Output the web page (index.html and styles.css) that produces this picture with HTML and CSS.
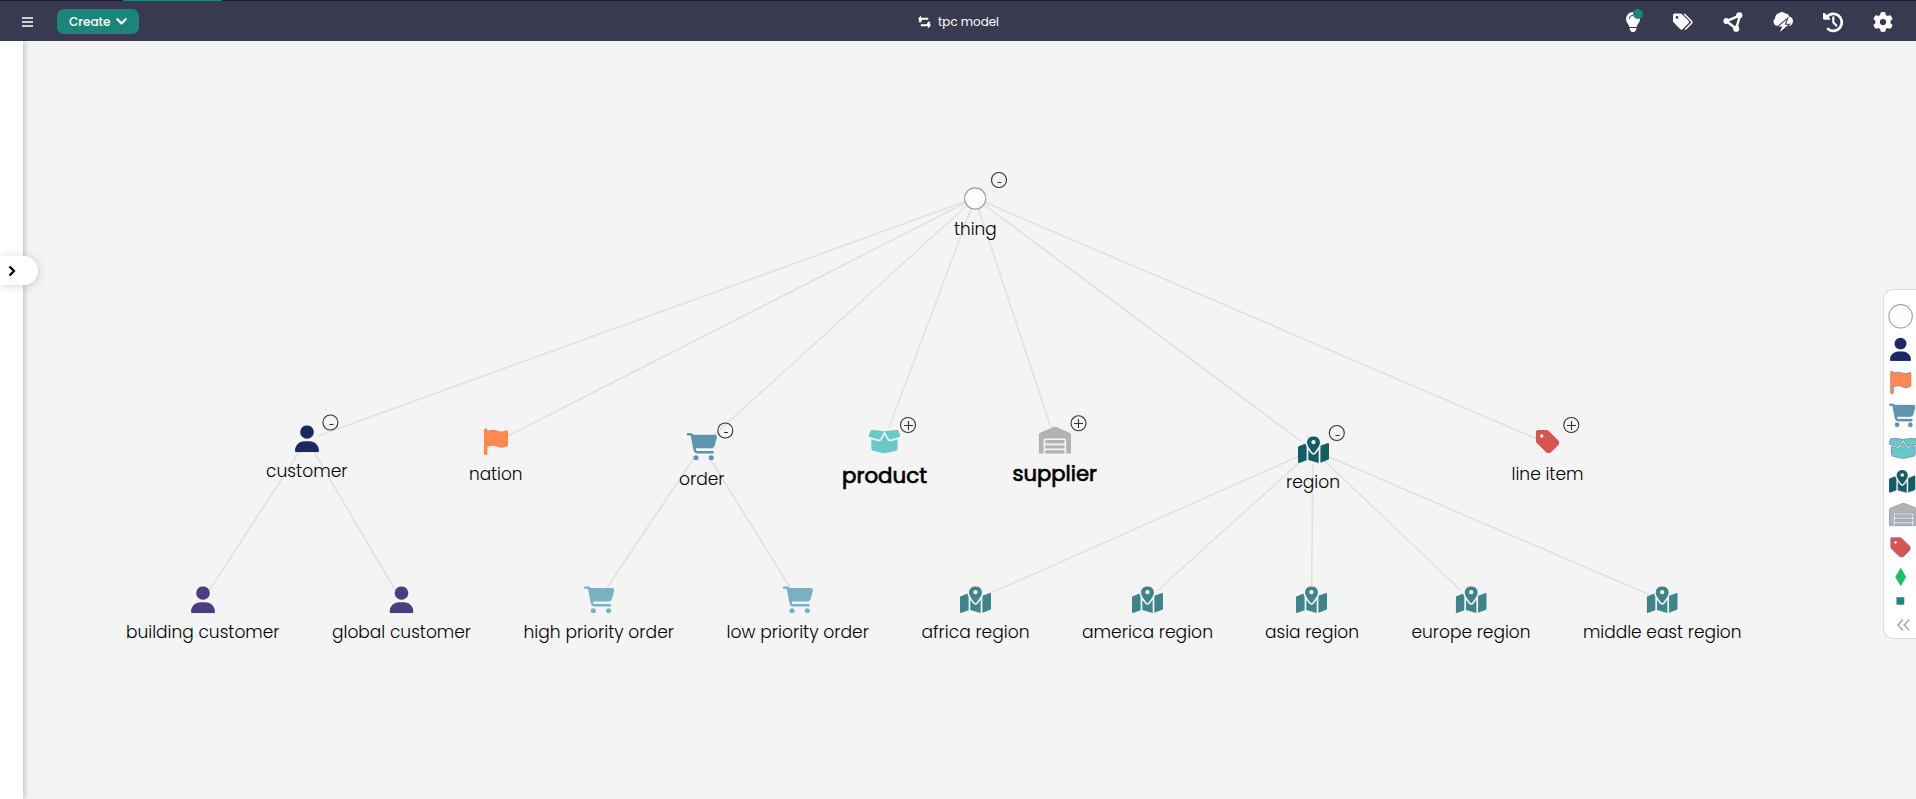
FILE: index.html
```html
<!DOCTYPE html>
<html lang="en">
<head>
<meta charset="utf-8">
<title>tpc model</title>
<link rel="stylesheet" href="styles.css">
</head>
<body>
<svg class="defs" aria-hidden="true">
  <symbol id="user" viewBox="0 0 448 512" preserveAspectRatio="none"><path d="M224 256A128 128 0 1 0 224 0a128 128 0 1 0 0 256zm-45.700 48C79.800 304 0 383.800 0 482.300C0 498.700 13.300 512 29.700 512l388.600 0c16.400 0 29.700-13.300 29.700-29.700C448 383.800 368.200 304 269.700 304l-91.400 0z"/></symbol>
  <symbol id="flag" viewBox="0 0 448 512" preserveAspectRatio="none"><path d="M64 32C64 14.300 49.700 0 32 0S0 14.300 0 32V480c0 17.700 14.300 32 32 32s32-14.300 32-32V352l64.300-16.100c41.100-10.300 84.600-5.500 122.500 13.400c44.200 22.100 95.500 24.800 141.700 7.400l34.700-13c12.500-4.700 20.800-16.600 20.800-30V66.100c0-23-24.200-38-44.800-27.700l-9.600 4.800c-46.300 23.200-100.800 23.200-147.100 0c-35.100-17.600-75.400-22-113.500-12.500L64 48V32z"/></symbol>
  <symbol id="cart" viewBox="0 0 576 512" preserveAspectRatio="none"><path d="M0 24C0 10.700 10.700 0 24 0H69.500c22 0 41.500 12.800 50.600 32h411c26.300 0 45.500 25 38.600 50.400l-41 152.300c-8.500 31.400-37 53.300-69.500 53.300H170.700l5.400 28.500c2.200 11.300 12.100 19.500 23.600 19.500H488c13.300 0 24 10.700 24 24s-10.700 24-24 24H199.700c-34.600 0-64.300-24.600-70.700-58.500L77.400 54.500c-.7-3.800-4-6.500-7.900-6.500H24C10.700 48 0 37.300 0 24zM128 464a48 48 0 1 1 96 0 48 48 0 1 1 -96 0zm336-48a48 48 0 1 1 0 96 48 48 0 1 1 0-96z"/></symbol>
  <symbol id="box" viewBox="13 33 614 446" preserveAspectRatio="none"><path d="M58.900 42.100c3-6.100 9.600-9.600 16.300-8.700L320 64 564.800 33.400c6.700-.8 13.300 2.700 16.300 8.700l41.700 83.400c9 17.900-.6 39.600-19.800 45.100L439.600 217.300c-13.900 4-28.800-1.900-36.200-14.300L320 64 236.600 203c-7.400 12.400-22.300 18.300-36.200 14.300L37.100 170.600c-19.300-5.500-28.800-27.200-19.800-45.100L58.900 42.100zM321.100 128l54.900 91.400c14.900 24.800 44.600 36.600 72.500 28.600L576 211.600v167c0 22-15 41.200-36.400 46.600l-204.100 51c-10.200 2.600-20.900 2.600-31 0l-204.100-51C79 419.700 64 400.500 64 378.500v-167L191.600 248c27.800 8 57.600-3.800 72.500-28.600L318.900 128h2.200z"/></symbol>
  <symbol id="map" viewBox="0 0 576 512" preserveAspectRatio="none"><path d="M408 120c0 54.600-73.100 151.900-105.200 192c-7.700 9.600-22 9.600-29.600 0C241.100 271.900 168 174.600 168 120C168 53.700 221.700 0 288 0s120 53.700 120 120zm8 80.400c3.500-6.900 6.700-13.800 9.600-20.600c.5-1.200 1-2.500 1.500-3.700l116-46.400C558.900 123.400 576 135 576 152V422.800c0 9.800-6 18.600-15.100 22.300L416 503V200.400zM137.600 138.300c2.400 14.100 7.200 28.300 12.800 41.500c2.900 6.800 6.100 13.700 9.600 20.600V451.800L32.900 502.700C17.100 509 0 497.400 0 480.400V209.600c0-9.800 6-18.600 15.100-22.300l122.600-49zM327.800 332c13.900-17.400 35.700-45.700 56.200-77V504.300L192 449.400V255c20.500 31.300 42.300 59.600 56.200 77c20.500 25.600 59.100 25.600 79.600 0zM288 152a40 40 0 1 0 0-80 40 40 0 1 0 0 80z"/></symbol>
  <symbol id="warehouse" viewBox="0 0 640 512" preserveAspectRatio="none"><path d="M504 352H136.400c-4.400 0-8 3.600-8 8l-.1 48c0 4.400 3.600 8 8 8H504c4.400 0 8-3.600 8-8v-48c0-4.400-3.600-8-8-8zm0 96H136.100c-4.400 0-8 3.600-8 8l-.1 48c0 4.400 3.600 8 8 8h368c4.400 0 8-3.600 8-8v-48c0-4.400-3.600-8-8-8zm0-192H136.600c-4.400 0-8 3.600-8 8l-.1 48c0 4.400 3.600 8 8 8H504c4.400 0 8-3.600 8-8v-48c0-4.400-3.600-8-8-8zm106.500-139L338.400 3.700a48.150 48.150 0 0 0-36.900 0L29.500 117C11.700 124.500 0 141.900 0 161.300V504c0 4.400 3.600 8 8 8h80c4.400 0 8-3.600 8-8V256c0-17.600 14.600-32 32.600-32h382.800c18 0 32.600 14.400 32.600 32v248c0 4.400 3.600 8 8 8h80c4.400 0 8-3.600 8-8V161.300c0-19.400-11.700-36.800-29.500-44.300z"/></symbol>
  <symbol id="tag" viewBox="0 32 438 438" preserveAspectRatio="none"><path d="M0 80V229.500c0 17 6.700 33.300 18.700 45.300l176 176c25 25 65.500 25 90.500 0L418.700 317.300c25-25 25-65.500 0-90.500l-176-176c-12-12-28.300-18.700-45.300-18.700H48C21.500 32 0 53.500 0 80zm112 32a32 32 0 1 1 0 64 32 32 0 1 1 0-64z"/></symbol>
</svg>

<header class="topbar">
  <div class="progress"></div>
  <div class="top-left">
    <svg class="burger" viewBox="0 0 11 10"><path d="M0 1h11M0 5h11M0 9h11"/></svg>
    <button class="create">
      <svg class="create-label" viewBox="0 0 42 16"><text x="0" y="12" textLength="41.500" lengthAdjust="spacingAndGlyphs">Create</text></svg>
      <svg class="caret" viewBox="0 0 11 7"><path d="M1.300 1.200l4.200 4.200 4.200-4.200"/></svg>
    </button>
  </div>
  <div class="title">
    <svg class="swap" viewBox="0 0 14 14"><path d="M1.500 7.200L4 3.500h7M12.500 6.800L10 10.500H3" class="stroke"/><path d="M3.400 0v7L0 3.500zM10.600 7v7L14 10.500z"/></svg>
    <svg class="title-label" viewBox="0 0 62 20"><text x="0" y="13.500" textLength="61" lengthAdjust="spacingAndGlyphs">tpc model</text></svg>
  </div>
  <nav class="tools">
    <svg class="tool" viewBox="0 0 20 20"><path d="M10 0a7 7 0 0 0-7 7c0 3.500 2.700 5 3.400 8h7.200c.7-3 3.400-4.500 3.400-8a7 7 0 0 0-7-7zM6.700 16h6.600v1.300L11.500 20h-3l-1.800-2.700z"/><path d="M6.200 7A3.800 3.800 0 0 1 10 3.300" class="cut"/><circle cx="15" cy="2" r="5" class="dot"/></svg>
    <svg class="tool" viewBox="0 0 20 20"><path d="M0 3.200Q0 1.500 1.700 1.500h5.600q1 0 1.700.7l6.500 6.500q1.200 1.300 0 2.600l-5.800 5.800q-1.300 1.200-2.600 0L.7 10.600Q0 10 0 9zM4 4a1.400 1.400 0 1 0 0 2.800A1.400 1.400 0 1 0 4 4z" fill-rule="evenodd"/><path d="M11.500 2.300l7 7q.9 1 0 2l-6 6" class="thin"/></svg>
    <svg class="tool" viewBox="0 0 20 20"><path d="M3.500 9.200L17 3.300 13.200 16.800z" class="net"/><circle cx="3.300" cy="9" r="2.900"/><circle cx="16.300" cy="3.300" r="3.100"/><circle cx="13.200" cy="16.700" r="3.100"/></svg>
    <svg class="tool" viewBox="0 0 20 20"><path d="M4.400 14A4.300 4.300 0 0 1 2.300 6.200 4.200 4.200 0 0 1 6 1.300Q7.300 0 9 0q2.300 0 3.400 1.500 3.100-.2 3.600 2.900 3.800.5 4 4.600-.2 4.700-4.400 5z"/><path d="M13.600 7.800L5.500 14.400h3.700L7 20l8.300-7.200h-3.600z" class="bolt"/></svg>
    <svg class="tool" viewBox="0 0 20 20"><path d="M3.500 5.300A8.500 8.500 0 1 1 5 17" class="clock"/><path d="M10.300 5.300v5l3 3.200" class="hand"/><path d="M0 1l1.600.1 5.600 5.500-.3 1.200H1.200Q0 7.600 0 6.600z"/></svg>
    <svg class="tool" viewBox="0 0 512 512"><path d="M495.900 166.600c3.200 8.700 .5 18.400-6.400 24.600l-43.300 39.400c1.100 8.300 1.700 16.800 1.700 25.400s-.6 17.100-1.700 25.400l43.300 39.400c6.900 6.200 9.600 15.900 6.400 24.600c-4.400 11.900-9.700 23.300-15.800 34.300l-4.700 8.100c-6.600 11-14 21.400-22.100 31.200c-5.900 7.200-15.700 9.600-24.500 6.800l-55.700-17.700c-13.400 10.300-28.200 18.900-44 25.400l-12.500 57.100c-2 9.100-9 16.300-18.200 17.800c-13.800 2.300-28 3.500-42.500 3.500s-28.700-1.200-42.500-3.500c-9.200-1.500-16.200-8.700-18.200-17.800l-12.500-57.100c-15.800-6.500-30.600-15.100-44-25.400L83.100 425.900c-8.800 2.800-18.600 .3-24.500-6.800c-8.100-9.800-15.500-20.200-22.100-31.200l-4.700-8.100c-6.100-11-11.400-22.400-15.800-34.300c-3.200-8.700-.5-18.400 6.400-24.600l43.300-39.400C64.600 273.100 64 264.600 64 256s.6-17.100 1.700-25.400L22.400 191.200c-6.900-6.200-9.600-15.900-6.400-24.600c4.400-11.900 9.700-23.300 15.800-34.300l4.700-8.100c6.600-11 14-21.400 22.100-31.200c5.900-7.200 15.700-9.600 24.500-6.800l55.700 17.700c13.400-10.300 28.200-18.900 44-25.400l12.500-57.100c2-9.100 9-16.300 18.200-17.800C227.300 1.200 241.500 0 256 0s28.700 1.200 42.500 3.500c9.200 1.500 16.200 8.700 18.200 17.800l12.500 57.100c15.800 6.500 30.600 15.100 44 25.400l55.700-17.700c8.800-2.800 18.600-.3 24.500 6.800c8.100 9.800 15.500 20.200 22.100 31.200l4.700 8.100c6.100 11 11.400 22.400 15.800 34.300zM256 336a80 80 0 1 0 0-160 80 80 0 1 0 0 160z"/></svg>
  </nav>
</header>

<main class="stage">
  <svg class="graph" viewBox="0 41 1916 758">
    <g class="edges">
      <path d="M975 198L307 440M975 198L496 442M975 198L702 446M975 198L884 441M975 198L1055 440M975 198L1313 450M975 198L1547 443"/>
      <path d="M307 440L203 600M307 440L401 600M702 446L599 600M702 446L798 600"/>
      <path d="M1313 450L975 600M1313 450L1147 600M1313 450L1311.500 600M1313 450L1471 600M1313 450L1662 600"/>
    </g>
    <g class="gaps">
      <circle cx="307" cy="440" r="12"/><circle cx="496" cy="442" r="12"/><circle cx="702" cy="446" r="14"/><circle cx="884" cy="441" r="14"/><circle cx="1055" cy="440" r="14"/><circle cx="1313" cy="450" r="15"/><circle cx="1547" cy="442" r="11"/>
      <circle cx="203" cy="600" r="11"/><circle cx="401" cy="600" r="11"/><circle cx="599" cy="600" r="14"/><circle cx="798" cy="600" r="14"/><circle cx="975" cy="600" r="14"/><circle cx="1147" cy="600" r="14"/><circle cx="1311.500" cy="600" r="14"/><circle cx="1471" cy="600" r="14"/><circle cx="1662" cy="600" r="14"/>
    </g>
    <circle class="root" cx="975.200" cy="198.500" r="10.600"/>
    <use href="#user" class="navy" x="295" y="425.300" width="24" height="27"/>
    <use href="#flag" class="orange" x="484" y="428.300" width="24" height="27"/>
    <use href="#cart" class="blue" x="686.700" y="433" width="30.500" height="27.300"/>
    <use href="#box" class="aqua" x="868.700" y="429.700" width="31.600" height="23.800"/>
    <use href="#warehouse" class="grey" x="1038.700" y="426.500" width="32.300" height="27.200"/>
    <use href="#map" class="teal" x="1298" y="436.300" width="31" height="27"/>
    <use href="#tag" class="red" x="1535.700" y="430" width="23.500" height="23.300"/>
    <g class="violet"><use href="#user" x="191" y="586.300" width="24" height="27"/><use href="#user" x="389.500" y="586.300" width="24" height="27"/></g>
    <g class="sky"><use href="#cart" x="584" y="586.300" width="30.500" height="27"/><use href="#cart" x="782.700" y="586.300" width="30.500" height="27"/></g>
    <g class="sea"><use href="#map" x="960" y="586.300" width="31" height="27"/><use href="#map" x="1132" y="586.300" width="31" height="27"/><use href="#map" x="1296" y="586.300" width="31" height="27"/><use href="#map" x="1455.700" y="586.300" width="31" height="27"/><use href="#map" x="1646.700" y="586.300" width="31" height="27"/></g>
    <g class="badges">
      <circle cx="999" cy="180" r="7.500"/><circle cx="330.400" cy="422.500" r="7.500"/><circle cx="725.300" cy="430.500" r="7.500"/><circle cx="908" cy="425" r="7.500"/><circle cx="1078.500" cy="423.300" r="7.500"/><circle cx="1336.800" cy="433" r="7.500"/><circle cx="1571.300" cy="425" r="7.500"/>
      <path d="M997.500 182.500h4M329.500 424.500h4M724 432.500h4M1335.500 435.500h4"/>
      <path d="M904 425.500h9M908.500 421v9M1074 423.500h9M1078.500 419v9M1567 425.500h9M1571.500 421v9"/>
    </g>
    <g class="labels">
      <text x="954" y="234.700" textLength="42.500" lengthAdjust="spacingAndGlyphs">thing</text>
      <text x="266" y="476.700" textLength="81.500" lengthAdjust="spacingAndGlyphs">customer</text>
      <text x="469" y="479.700" textLength="53.500" lengthAdjust="spacingAndGlyphs">nation</text>
      <text x="679" y="484.700" textLength="45.500" lengthAdjust="spacingAndGlyphs">order</text>
      <text x="842" y="483" textLength="85" lengthAdjust="spacingAndGlyphs" class="strong">product</text>
      <text x="1012.500" y="481" textLength="84.500" lengthAdjust="spacingAndGlyphs" class="strong">supplier</text>
      <text x="1286" y="487.700" textLength="54" lengthAdjust="spacingAndGlyphs">region</text>
      <text x="1511.500" y="479.700" textLength="72" lengthAdjust="spacingAndGlyphs">line item</text>
      <text x="126" y="637.800" textLength="153.500" lengthAdjust="spacingAndGlyphs">building customer</text>
      <text x="332" y="637.800" textLength="139" lengthAdjust="spacingAndGlyphs">global customer</text>
      <text x="523.500" y="637.800" textLength="150.500" lengthAdjust="spacingAndGlyphs">high priority order</text>
      <text x="726.500" y="637.800" textLength="142.500" lengthAdjust="spacingAndGlyphs">low priority order</text>
      <text x="921.500" y="637.800" textLength="108" lengthAdjust="spacingAndGlyphs">africa region</text>
      <text x="1082" y="637.800" textLength="131" lengthAdjust="spacingAndGlyphs">america region</text>
      <text x="1265" y="637.800" textLength="94" lengthAdjust="spacingAndGlyphs">asia region</text>
      <text x="1411.500" y="637.800" textLength="119" lengthAdjust="spacingAndGlyphs">europe region</text>
      <text x="1583" y="637.800" textLength="158.500" lengthAdjust="spacingAndGlyphs">middle east region</text>
    </g>
  </svg>
  <aside class="side"></aside>
  <button class="expand"><svg viewBox="0 0 8 12"><path d="M1.500 1.500L6 6l-4.500 4.500"/></svg></button>
  <aside class="legend">
    <svg viewBox="1884 290 32 348">
      <circle cx="1900.600" cy="316.300" r="11.700" class="root"/>
      <g class="outlined">
      <use href="#user" class="navy" x="1890" y="337.700" width="21" height="23.300"/>
      <use href="#flag" class="orange" x="1890.300" y="371" width="21" height="23"/>
      <use href="#cart" class="blue" x="1889" y="403.500" width="26.500" height="23.500"/>
      <use href="#box" class="aqua" x="1889" y="438" width="28.500" height="20.700"/>
      <use href="#map" class="teal" x="1889" y="470" width="26.500" height="23"/>
      <use href="#warehouse" class="grey" x="1889" y="503" width="29" height="23.300"/>
      <use href="#tag" class="red" x="1890.300" y="537.300" width="20.300" height="20"/>
      </g>
      <path class="diamond" d="M1900.700 568.500l5 8.500-5 8.500-5-8.500z"/>
      <rect class="square" x="1896.800" y="597.500" width="7.200" height="7"/>
      <path class="collapse" d="M1903 619.500l-5 5.500 5 5.500M1909.300 619.500l-5 5.500 5 5.500"/>
    </svg>
  </aside>
</main>
</body>
</html>
```
FILE: styles.css
```css
* { box-sizing: border-box; }
body {
  margin: 0;
  height: 799px;
  overflow: hidden;
  background: #f4f4f4;
  font-family: Poppins, Inter, "Open Sans", sans-serif;
}
svg { display: block; }
button { border: 0; padding: 0; font: inherit; }
.defs { position: absolute; width: 0; height: 0; }

.topbar {
  position: relative;
  height: 41px;
  display: grid;
  grid-template-columns: 1fr auto 1fr;
  align-items: center;
  padding: 1px 23px 0 22px;
  background: #383b4f;
  border-top: 1px solid #1a1c33;
}
.progress { position: absolute; top: -1px; left: 123px; width: 99px; height: 1px; background: #1b857a; }
.top-left { display: flex; align-items: center; gap: 24px; }
.burger { width: 11px; height: 10px; stroke: #fff; stroke-width: 1.7; }
.create {
  display: flex;
  align-items: center;
  gap: 5px;
  width: 82px;
  height: 25px;
  padding-left: 12px;
  border-radius: 7px;
  background: #1b857a;
}
.create-label { width: 42px; height: 16px; fill: #fff; font-size: 13px; font-weight: 500; overflow: visible; }
.caret { width: 11px; height: 7px; fill: none; stroke: #fff; stroke-width: 2.2; stroke-linecap: round; stroke-linejoin: round; }
.title { display: flex; align-items: center; gap: 7px; padding-left: 3px; }
.swap { width: 13px; height: 14px; fill: #fff; }
.swap .stroke { fill: none; stroke: #fff; stroke-width: 2.4; stroke-linejoin: round; }
.title-label { width: 62px; height: 20px; fill: #fff; font-size: 13px; overflow: visible; }
.tools { justify-self: end; display: flex; gap: 30px; }
.tool { width: 20px; height: 20px; fill: #fff; overflow: visible; }
.tool .cut { fill: none; stroke: #383b4f; stroke-width: 1; }
.tool .dot { fill: #1b857a; }
.tool .thin { fill: none; stroke: #fff; stroke-width: 1.5; stroke-linecap: round; }
.tool .net { fill: none; stroke: #fff; stroke-width: 2.400; }
.tool .bolt { stroke: #383b4f; stroke-width: 2; paint-order: stroke; }
.tool .clock { fill: none; stroke: #fff; stroke-width: 2.700; stroke-linecap: round; }
.tool .hand { fill: none; stroke: #fff; stroke-width: 2.200; stroke-linecap: round; }

.stage { position: relative; height: 758px; overflow: hidden; }
.graph { width: 1916px; height: 758px; }
.edges { fill: none; stroke: #e1e1e1; stroke-width: 1.6; }
.gaps { fill: #f4f4f4; }
.root { fill: #fff; stroke: #8fa3bf; stroke-width: 1.1; }
.navy { fill: #1c2863; }
.orange { fill: #ff8750; }
.blue { fill: #5b96ae; }
.aqua { fill: #69c9c9; }
.grey { fill: #b3b3b3; }
.teal { fill: #125d66; }
.red { fill: #d9534f; }
.violet { fill: #4d3d80; }
.sky { fill: #79b0c2; }
.sea { fill: #3d858b; }
.badges { fill: none; stroke: #333; stroke-width: 1.1; }
.labels { fill: #000; font-size: 17.600px; font-weight: 300; }
.labels .strong { font-size: 21.500px; font-weight: 400; stroke: #000; stroke-width: .7; }

.side {
  position: absolute;
  inset: 0 auto 0 0;
  width: 23px;
  background: #fff;
  box-shadow: 1px 0 6px rgba(0, 0, 0, .25);
}
.expand {
  position: absolute;
  left: 0;
  top: 215px;
  width: 38px;
  height: 29px;
  padding: 1px 0 0 8px;
  border-radius: 0 15px 15px 0;
  background: #fff;
  box-shadow: 1px 1px 8px rgba(60, 40, 80, .2);
}
.expand svg { width: 8px; height: 12px; fill: none; stroke: #000; stroke-width: 2.2; }
.legend {
  position: absolute;
  right: 0;
  top: 248px;
  width: 33px;
  height: 350px;
  border: 1px solid #dcdcdc;
  border-right: 0;
  border-radius: 10px 0 0 10px;
  background: #fff;
  overflow: hidden;
}
.legend svg { width: 32px; height: 348px; }
.outlined { stroke: #6f86ad; stroke-width: 18; }
.outlined .navy, .outlined .teal, .outlined .blue { stroke-width: 6; }
.outlined .grey { stroke-width: 11; }
.diamond { fill: #0cc66c; stroke: #1f9f64; stroke-width: .7; }
.square { fill: #158a80; stroke: #53859a; stroke-width: .6; }
.collapse { fill: none; stroke: #b0b0b0; stroke-width: 1.8; }
```
